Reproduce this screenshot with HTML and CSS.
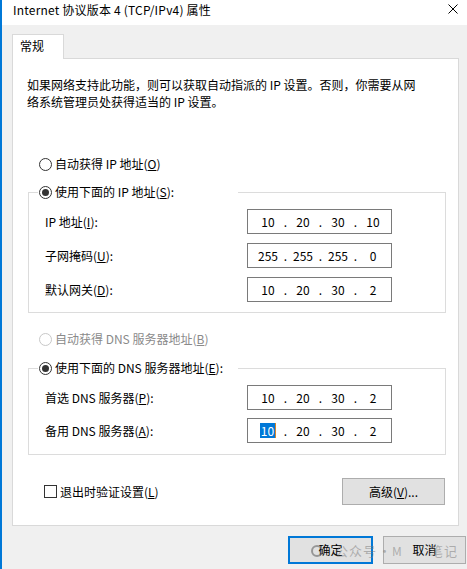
FILE: index.html
```html
<!DOCTYPE html>
<html lang="zh-CN">
<head>
<meta charset="utf-8">
<title>Internet 协议版本 4 (TCP/IPv4) 属性</title>
<link rel="stylesheet" href="styles.css">
</head>
<body>
<div class="window">
  <div class="titlebar">
    <span class="title">Internet 协议版本 4 (TCP/IPv4) 属性</span>
    <svg class="close" width="10" height="10" viewBox="0 0 10 10"><path d="M0.5 0.5 L9.5 9.5 M9.5 0.5 L0.5 9.5" stroke="#000" stroke-width="1" fill="none"/></svg>
  </div>
  <div class="content">
    <div class="tabs"><div class="tab">常规</div></div>
    <div class="panel">
      <p class="desc">如果网络支持此功能，则可以获取自动指派的 IP 设置。否则，你需要从网<br>络系统管理员处获得适当的 IP 设置。</p>

      <div class="radio-row auto-ip"><span class="radio"></span><span>自动获得 IP 地址(<u>O</u>)</span></div>

      <fieldset class="group">
        <legend class="radio-row"><span class="radio checked"></span><span>使用下面的 IP 地址(<u>S</u>):</span></legend>
        <div class="field"><span class="label">IP 地址(<u>I</u>):</span>
          <div class="ipbox"><span class="seg">10</span><span class="dot">.</span><span class="seg">20</span><span class="dot">.</span><span class="seg">30</span><span class="dot">.</span><span class="seg">10</span></div>
        </div>
        <div class="field"><span class="label">子网掩码(<u>U</u>):</span>
          <div class="ipbox"><span class="seg">255</span><span class="dot">.</span><span class="seg">255</span><span class="dot">.</span><span class="seg">255</span><span class="dot">.</span><span class="seg">0</span></div>
        </div>
        <div class="field"><span class="label">默认网关(<u>D</u>):</span>
          <div class="ipbox"><span class="seg">10</span><span class="dot">.</span><span class="seg">20</span><span class="dot">.</span><span class="seg">30</span><span class="dot">.</span><span class="seg">2</span></div>
        </div>
      </fieldset>

      <div class="radio-row auto-dns disabled"><span class="radio"></span><span>自动获得 DNS 服务器地址(<u>B</u>)</span></div>

      <fieldset class="group dns">
        <legend class="radio-row"><span class="radio checked"></span><span>使用下面的 DNS 服务器地址(<u>E</u>):</span></legend>
        <div class="field"><span class="label">首选 DNS 服务器(<u>P</u>):</span>
          <div class="ipbox"><span class="seg">10</span><span class="dot">.</span><span class="seg">20</span><span class="dot">.</span><span class="seg">30</span><span class="dot">.</span><span class="seg">2</span></div>
        </div>
        <div class="field tight"><span class="label">备用 DNS 服务器(<u>A</u>):</span>
          <div class="ipbox"><span class="seg"><span class="sel">10</span></span><span class="dot">.</span><span class="seg">20</span><span class="dot">.</span><span class="seg">30</span><span class="dot">.</span><span class="seg">2</span></div>
        </div>
      </fieldset>

      <div class="bottom-row">
        <div class="check-row"><span class="checkbox"></span><span>退出时验证设置(<u>L</u>)</span></div>
        <button class="btn advanced">高级(<u>V</u>)...</button>
      </div>
    </div>
    <div class="footer">
      <button class="btn ok">确定</button>
      <button class="btn cancel">取消</button>
    </div>
  </div>
  <div class="watermark"><span class="wm-icon"></span><span class="wm-text">公众号</span><span class="wm-dot">·</span><span class="wm-m">M</span><span class="wm-text wm-end">笔记</span></div>
</div>
</body>
</html>
```

FILE: styles.css
```css
* { box-sizing: border-box; }

html, body {
  margin: 0;
  padding: 0;
}

body {
  width: 467px;
  height: 569px;
  overflow: hidden;
  background: #f0f0f0;
  font-family: "Noto Sans CJK SC", "Noto Sans", sans-serif;
  font-size: 12px;
  color: #000;
}

.window {
  position: relative;
  height: 569px;
  border-left: 2px solid #0078d7;
}

.titlebar {
  height: 25px;
  background: #fff;
  display: flex;
  justify-content: space-between;
  align-items: flex-start;
  padding: 2px 9px 0 11px;
}

.title {
  line-height: 16px;
  letter-spacing: 0.2px;
}

.close {
  margin-top: 2px;
  display: block;
}

.content {
  padding: 9px 1px 0 10px;
}

.tabs {
  display: flex;
}

.tab {
  position: relative;
  z-index: 1;
  width: 52px;
  height: 25px;
  margin-bottom: -1px;
  background: #fff;
  border: 1px solid #d9d9d9;
  border-bottom: none;
  padding: 3px 0 0 7px;
  line-height: 16px;
}

.panel {
  width: 447px;
  height: 468px;
  background: #fff;
  border: 1px solid #d9d9d9;
  display: flex;
  flex-direction: column;
}

.desc {
  margin: 17px 0 0 14px;
  line-height: 17px;
  white-space: nowrap;
}

.radio-row {
  display: flex;
  align-items: center;
  gap: 3px;
  line-height: 16px;
  white-space: nowrap;
}

.radio {
  width: 13px;
  height: 13px;
  border: 1px solid #333;
  border-radius: 50%;
  background: #fff;
  display: flex;
  align-items: center;
  justify-content: center;
  flex: none;
}

.radio.checked::after {
  content: "";
  width: 7px;
  height: 7px;
  border-radius: 50%;
  background: #333;
}

.auto-ip {
  margin: 46px 0 0 26px;
}

.auto-dns {
  margin: 18px 0 0 26px;
}

.disabled {
  color: #8a8a8a;
}

.disabled .radio {
  border-color: #c8c8c8;
}

.group {
  margin: 12px 12px 0 15px;
  border: 1px solid #dcdcdc;
  padding: 0 0 10px 9px;
  min-width: 0;
}

.group.dns {
  margin-top: 13px;
  padding-bottom: 11px;
}

.group legend {
  width: 200px;
  padding: 0 0 0 1px;
}

.field {
  display: grid;
  grid-template-columns: 202px 145px;
  align-items: center;
  margin: 9px 0 0 7px;
}

.field.tight {
  margin-top: 8px;
}

.label {
  line-height: 16px;
  white-space: nowrap;
}

.ipbox {
  height: 25px;
  border: 1px solid #7a7a7a;
  background: #fff;
  display: flex;
  align-items: center;
  padding-left: 7px;
  line-height: 15px;
}

.seg {
  width: 26px;
  text-align: center;
}

.dot {
  width: 9px;
  text-align: center;
}

.sel {
  display: inline-block;
  background: #0078d7;
  color: #fff;
  padding: 0 1px;
  border-right: 1px solid #d8862a;
}

.bottom-row {
  display: flex;
  justify-content: space-between;
  align-items: center;
  margin: 23px 13px 0 31px;
}

.check-row {
  display: flex;
  align-items: center;
  gap: 3px;
  line-height: 16px;
}

.checkbox {
  width: 13px;
  height: 13px;
  border: 1px solid #333;
  background: #fff;
}

.btn {
  font-family: inherit;
  font-size: 12px;
  color: #000;
  background: #e1e1e1;
  border: 1px solid #adadad;
  padding: 0;
  line-height: 16px;
}

.advanced {
  width: 103px;
  height: 27px;
}

.footer {
  display: flex;
  justify-content: flex-end;
  gap: 10px;
  margin-top: 10px;
}

.ok {
  width: 85px;
  height: 28px;
  border: 2px solid #0078d7;
}

.cancel {
  width: 83px;
  height: 28px;
}

.watermark {
  position: absolute;
  left: 309px;
  top: 542px;
  display: flex;
  align-items: center;
  font-size: 13px;
  line-height: 18px;
  color: rgba(120, 120, 120, 0.5);
  white-space: nowrap;
}

.wm-icon {
  width: 12px;
  height: 12px;
  border-radius: 50%;
  border: 2px solid rgba(90, 90, 90, 0.55);
  margin-right: 12px;
}

.wm-text {
  letter-spacing: 1px;
}

.wm-dot {
  width: 15px;
  text-align: center;
}

.wm-m {
  width: 38px;
  font-size: 12px;
}

.wm-end {
  width: 28px;
}
```
